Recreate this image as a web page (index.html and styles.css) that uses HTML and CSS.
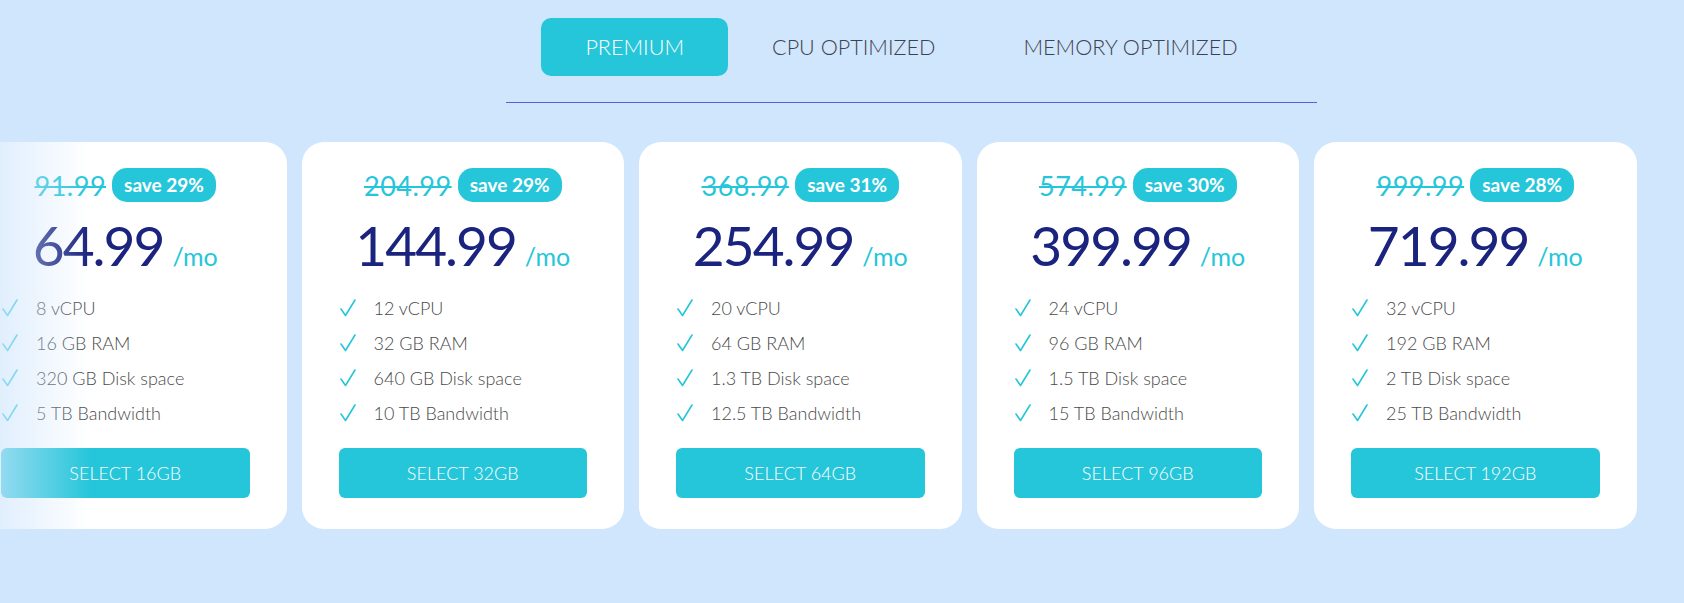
FILE: index.html
```html
<!DOCTYPE html>
<html lang="en">
<head>
<meta charset="utf-8">
<title>Pricing</title>
<link rel="stylesheet" href="styles.css">
</head>
<body>
<div class="page">
  <header class="head">
    <nav class="tabs">
      <button class="tab active">PREMIUM</button>
      <button class="tab">CPU OPTIMIZED</button>
      <button class="tab">MEMORY OPTIMIZED</button>
    </nav>
    <div class="divider"></div>
  </header>

  <section class="slider">
    <div class="track">
      <div class="card">
        <div class="old-row"><span class="old">91.99</span><span class="badge">save 29%</span></div>
        <div class="price"><span class="amount">64.99</span><span class="per">/mo</span></div>
        <ul class="features">
          <li><svg class="check" viewBox="0 0 16 18"><polyline points="1,10 5.5,16.5 15,1"/></svg>8 vCPU</li>
          <li><svg class="check" viewBox="0 0 16 18"><polyline points="1,10 5.5,16.5 15,1"/></svg>16 GB RAM</li>
          <li><svg class="check" viewBox="0 0 16 18"><polyline points="1,10 5.5,16.5 15,1"/></svg>320 GB Disk space</li>
          <li><svg class="check" viewBox="0 0 16 18"><polyline points="1,10 5.5,16.5 15,1"/></svg>5 TB Bandwidth</li>
        </ul>
        <button class="select">SELECT 16GB</button>
      </div>
      <div class="card">
        <div class="old-row"><span class="old">204.99</span><span class="badge">save 29%</span></div>
        <div class="price"><span class="amount">144.99</span><span class="per">/mo</span></div>
        <ul class="features">
          <li><svg class="check" viewBox="0 0 16 18"><polyline points="1,10 5.5,16.5 15,1"/></svg>12 vCPU</li>
          <li><svg class="check" viewBox="0 0 16 18"><polyline points="1,10 5.5,16.5 15,1"/></svg>32 GB RAM</li>
          <li><svg class="check" viewBox="0 0 16 18"><polyline points="1,10 5.5,16.5 15,1"/></svg>640 GB Disk space</li>
          <li><svg class="check" viewBox="0 0 16 18"><polyline points="1,10 5.5,16.5 15,1"/></svg>10 TB Bandwidth</li>
        </ul>
        <button class="select">SELECT 32GB</button>
      </div>
      <div class="card">
        <div class="old-row"><span class="old">368.99</span><span class="badge">save 31%</span></div>
        <div class="price"><span class="amount">254.99</span><span class="per">/mo</span></div>
        <ul class="features">
          <li><svg class="check" viewBox="0 0 16 18"><polyline points="1,10 5.5,16.5 15,1"/></svg>20 vCPU</li>
          <li><svg class="check" viewBox="0 0 16 18"><polyline points="1,10 5.5,16.5 15,1"/></svg>64 GB RAM</li>
          <li><svg class="check" viewBox="0 0 16 18"><polyline points="1,10 5.5,16.5 15,1"/></svg>1.3 TB Disk space</li>
          <li><svg class="check" viewBox="0 0 16 18"><polyline points="1,10 5.5,16.5 15,1"/></svg>12.5 TB Bandwidth</li>
        </ul>
        <button class="select">SELECT 64GB</button>
      </div>
      <div class="card">
        <div class="old-row"><span class="old">574.99</span><span class="badge">save 30%</span></div>
        <div class="price"><span class="amount">399.99</span><span class="per">/mo</span></div>
        <ul class="features">
          <li><svg class="check" viewBox="0 0 16 18"><polyline points="1,10 5.5,16.5 15,1"/></svg>24 vCPU</li>
          <li><svg class="check" viewBox="0 0 16 18"><polyline points="1,10 5.5,16.5 15,1"/></svg>96 GB RAM</li>
          <li><svg class="check" viewBox="0 0 16 18"><polyline points="1,10 5.5,16.5 15,1"/></svg>1.5 TB Disk space</li>
          <li><svg class="check" viewBox="0 0 16 18"><polyline points="1,10 5.5,16.5 15,1"/></svg>15 TB Bandwidth</li>
        </ul>
        <button class="select">SELECT 96GB</button>
      </div>
      <div class="card">
        <div class="old-row"><span class="old">999.99</span><span class="badge">save 28%</span></div>
        <div class="price"><span class="amount">719.99</span><span class="per">/mo</span></div>
        <ul class="features">
          <li><svg class="check" viewBox="0 0 16 18"><polyline points="1,10 5.5,16.5 15,1"/></svg>32 vCPU</li>
          <li><svg class="check" viewBox="0 0 16 18"><polyline points="1,10 5.5,16.5 15,1"/></svg>192 GB RAM</li>
          <li><svg class="check" viewBox="0 0 16 18"><polyline points="1,10 5.5,16.5 15,1"/></svg>2 TB Disk space</li>
          <li><svg class="check" viewBox="0 0 16 18"><polyline points="1,10 5.5,16.5 15,1"/></svg>25 TB Bandwidth</li>
        </ul>
        <button class="select">SELECT 192GB</button>
      </div>
    </div>
    <div class="fade"></div>
  </section>
</div>
</body>
</html>
```

FILE: styles.css
```css
* { box-sizing: border-box; }

html, body {
  margin: 0;
  padding: 0;
  background: #d0e6fc;
  font-family: "Lato", "Noto Sans", sans-serif;
}

.page {
  width: 1684px;
  height: 603px;
  overflow: hidden;
  padding-top: 18px;
}

.head {
  width: 811px;
  margin-left: 506px;
  display: flex;
  flex-direction: column;
  align-items: center;
}

.tabs {
  display: flex;
}

.tab {
  height: 58px;
  padding: 0 44px;
  border: 0;
  border-radius: 10px;
  background: transparent;
  font-family: "Lato", "Noto Sans", sans-serif;
  font-weight: 300;
  font-size: 21.6px;
  color: #3d4250;
  cursor: pointer;
}

.tab.active {
  background: #26c6da;
  color: #ffffff;
}

.divider {
  align-self: stretch;
  margin-top: 26px;
  height: 1px;
  background: #5b5bea;
}

.slider {
  position: relative;
  margin-top: 39px;
}

.track {
  display: flex;
  gap: 15px;
  margin-left: -36px;
}

.card {
  flex: 0 0 322.5px;
  height: 387px;
  background: #ffffff;
  border-radius: 22px;
  padding: 26px 37px 31px;
  display: flex;
  flex-direction: column;
}

.old-row {
  display: flex;
  justify-content: center;
  align-items: center;
  gap: 6px;
  height: 34px;
}

.old {
  font-size: 27px;
  color: #26c6da;
  text-decoration: line-through;
  text-decoration-thickness: 2px;
  letter-spacing: 0.5px;
}

.badge {
  height: 34px;
  line-height: 34px;
  padding: 0 12px;
  border-radius: 15px;
  background: #26c6da;
  color: #ffffff;
  font-weight: 700;
  font-size: 19px;
}

.price {
  margin-top: 10px;
  display: flex;
  justify-content: center;
  align-items: baseline;
  gap: 9px;
  line-height: 66px;
  height: 66px;
}

.amount {
  font-size: 55px;
  color: #1a237e;
  letter-spacing: -2px;
}

.per {
  font-size: 25px;
  color: #26c6da;
}

.features {
  list-style: none;
  margin: 12px 0 0;
  padding: 0;
}

.features li {
  display: flex;
  align-items: center;
  height: 35px;
  font-size: 18px;
  font-weight: 300;
  color: #4a4a4a;
}

.check {
  width: 16px;
  height: 18px;
  margin-left: 1px;
  margin-right: 18px;
  fill: none;
  stroke: #26c6da;
  stroke-width: 1.6;
  stroke-linecap: round;
  stroke-linejoin: round;
}

.select {
  margin-top: 18px;
  height: 50px;
  width: 100%;
  border: 0;
  border-radius: 6px;
  background: #26c6da;
  color: #ffffff;
  font-family: "Lato", "Noto Sans", sans-serif;
  font-size: 18px;
  font-weight: 300;
  cursor: pointer;
}

.fade {
  position: absolute;
  left: 0;
  top: 0;
  bottom: 0;
  width: 90px;
  background: linear-gradient(to right, rgba(208, 230, 252, 0.65), rgba(208, 230, 252, 0));
  pointer-events: none;
}
```
